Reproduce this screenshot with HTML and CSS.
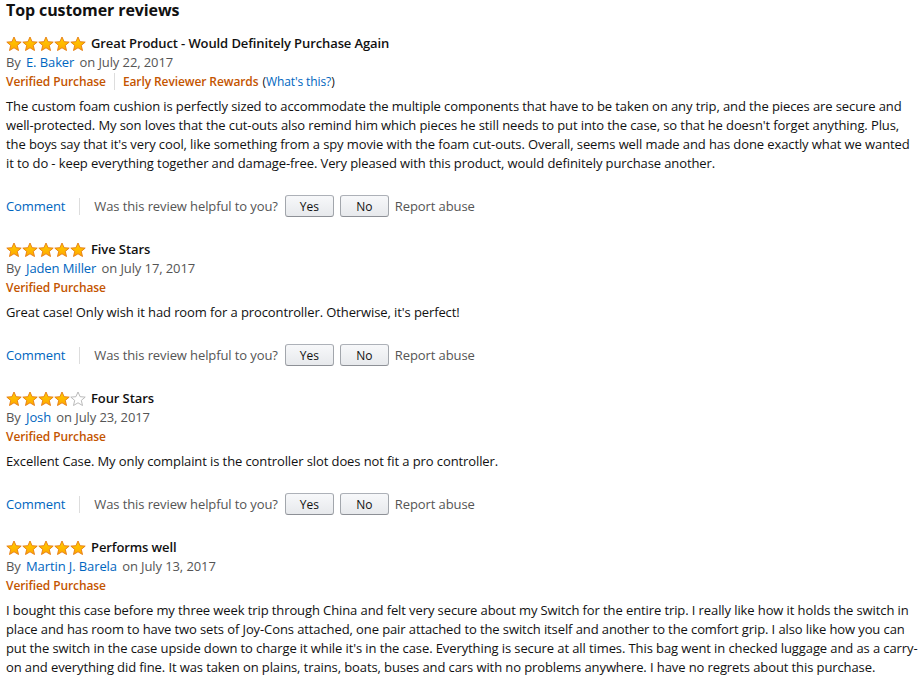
FILE: index.html
```html
<!DOCTYPE html>
<html lang="en">
<head>
<meta charset="utf-8">
<title>Top customer reviews</title>
<link rel="stylesheet" href="styles.css">
</head>
<body>
<svg width="0" height="0" class="defs">
  <defs>
    <linearGradient id="gold" x1="0" y1="0" x2="0" y2="1">
      <stop offset="0" stop-color="#ffce00"/>
      <stop offset="1" stop-color="#ffa700"/>
    </linearGradient>
    <symbol id="star" viewBox="0 0 16 16">
      <polygon points="8,1 10.1,5.7 15.2,6.1 11.3,9.4 12.5,14.5 8,11.8 3.5,14.5 4.7,9.4 0.8,6.1 5.9,5.7" fill="url(#gold)" stroke="#e47911" stroke-width="0.9" stroke-linejoin="round"/>
    </symbol>
    <symbol id="star-empty" viewBox="0 0 16 16">
      <polygon points="8,1 10.1,5.7 15.2,6.1 11.3,9.4 12.5,14.5 8,11.8 3.5,14.5 4.7,9.4 0.8,6.1 5.9,5.7" fill="#fff" stroke="#b2b2b2" stroke-width="0.9" stroke-linejoin="round"/>
    </symbol>
  </defs>
</svg>
<main class="reviews">
  <h2 class="heading">Top customer reviews</h2>

  <section class="review">
    <div class="title-row">
      <span class="stars">
        <svg class="star"><use href="#star"/></svg><svg class="star"><use href="#star"/></svg><svg class="star"><use href="#star"/></svg><svg class="star"><use href="#star"/></svg><svg class="star"><use href="#star"/></svg>
      </span>
      <span class="title">Great Product - Would Definitely Purchase Again</span>
    </div>
    <div class="byline">By <a class="link author">E. Baker</a> on July 22, 2017</div>
    <div class="badges"><span class="verified">Verified Purchase</span><span class="sep"></span><span class="verified">Early Reviewer Rewards</span> <span class="whats">(<a class="link">What's this?</a>)</span></div>
    <p class="body">The custom foam cushion is perfectly sized to accommodate the multiple components that have to be taken on any trip, and the pieces are secure and well-protected. My son loves that the cut-outs also remind him which pieces he still needs to put into the case, so that he doesn't forget anything. Plus, the boys say that it's very cool, like something from a spy movie with the foam cut-outs. Overall, seems well made and has done exactly what we wanted it to do - keep everything together and damage-free. Very pleased with this product, would definitely purchase another.</p>
    <div class="actions"><a class="link">Comment</a><span class="sep"></span><span class="helpful">Was this review helpful to you?</span><button class="btn">Yes</button><button class="btn">No</button><span class="report">Report abuse</span></div>
  </section>

  <section class="review">
    <div class="title-row">
      <span class="stars">
        <svg class="star"><use href="#star"/></svg><svg class="star"><use href="#star"/></svg><svg class="star"><use href="#star"/></svg><svg class="star"><use href="#star"/></svg><svg class="star"><use href="#star"/></svg>
      </span>
      <span class="title">Five Stars</span>
    </div>
    <div class="byline">By <a class="link author">Jaden Miller</a> on July 17, 2017</div>
    <div class="badges"><span class="verified">Verified Purchase</span></div>
    <p class="body">Great case! Only wish it had room for a procontroller. Otherwise, it's perfect!</p>
    <div class="actions"><a class="link">Comment</a><span class="sep"></span><span class="helpful">Was this review helpful to you?</span><button class="btn">Yes</button><button class="btn">No</button><span class="report">Report abuse</span></div>
  </section>

  <section class="review">
    <div class="title-row">
      <span class="stars">
        <svg class="star"><use href="#star"/></svg><svg class="star"><use href="#star"/></svg><svg class="star"><use href="#star"/></svg><svg class="star"><use href="#star"/></svg><svg class="star"><use href="#star-empty"/></svg>
      </span>
      <span class="title">Four Stars</span>
    </div>
    <div class="byline">By <a class="link author">Josh</a> on July 23, 2017</div>
    <div class="badges"><span class="verified">Verified Purchase</span></div>
    <p class="body">Excellent Case. My only complaint is the controller slot does not fit a pro controller.</p>
    <div class="actions"><a class="link">Comment</a><span class="sep"></span><span class="helpful">Was this review helpful to you?</span><button class="btn">Yes</button><button class="btn">No</button><span class="report">Report abuse</span></div>
  </section>

  <section class="review">
    <div class="title-row">
      <span class="stars">
        <svg class="star"><use href="#star"/></svg><svg class="star"><use href="#star"/></svg><svg class="star"><use href="#star"/></svg><svg class="star"><use href="#star"/></svg><svg class="star"><use href="#star"/></svg>
      </span>
      <span class="title">Performs well</span>
    </div>
    <div class="byline">By <a class="link author">Martin J. Barela</a> on July 13, 2017</div>
    <div class="badges"><span class="verified">Verified Purchase</span></div>
    <p class="body">I bought this case before my three week trip through China and felt very secure about my Switch for the entire trip. I really like how it holds the switch in place and has room to have two sets of Joy-Cons attached, one pair attached to the switch itself and another to the comfort grip. I also like how you can put the switch in the case upside down to charge it while it's in the case. Everything is secure at all times. This bag went in checked luggage and as a carry-on and everything did fine. It was taken on plains, trains, boats, buses and cars with no problems anywhere. I have no regrets about this purchase.</p>
  </section>
</main>
</body>
</html>
```

FILE: styles.css
```css
* { box-sizing: border-box; }
html, body { margin: 0; padding: 0; background: #fff; }
body {
  font-family: "Open Sans", "Noto Sans", Arial, sans-serif;
  font-size: 13px;
  line-height: 19px;
  letter-spacing: -0.1px;
  color: #111;
  overflow: hidden;
}
.defs { position: absolute; width: 0; height: 0; }
.reviews { padding: 0 4px 0 6px; width: 924px; }
.heading {
  margin: 0 0 13px;
  font-size: 16px;
  line-height: 21px;
  font-weight: 700;
}
.review { margin-bottom: 23px; }
.title-row { display: flex; align-items: center; height: 19px; }
.stars { display: inline-flex; margin-right: 5px; }
.star { width: 16px; height: 16px; display: block; }
.title { font-weight: 600; }
.byline { color: #555; }
.author { margin: 0 2px; }
.link { color: #0066c0; text-decoration: none; }
.badges { display: flex; align-items: center; }
.verified { color: #c45500; font-weight: 600; font-size: 12px; }
.sep { display: inline-block; width: 1px; height: 17px; background: #ddd; margin: 0 8px; }
.whats { margin-left: 4px; font-size: 12px; }
.body { margin: 6px 0 0; }
.actions { display: flex; align-items: center; margin-top: 22px; height: 22px; }
.actions .sep { margin: 0 14px; }
.helpful { color: #555; margin-right: 7px; }
.btn {
  font-family: inherit;
  font-size: 12px;
  color: #111;
  width: 49px;
  height: 22px;
  padding: 0;
  margin-right: 6px;
  border: 1px solid #adb1b8;
  border-color: #adb1b8 #a2a6ac #8d9096;
  border-radius: 3px;
  background: linear-gradient(#f7f8fa, #e7e9ec);
}
.report { color: #555; }
```
